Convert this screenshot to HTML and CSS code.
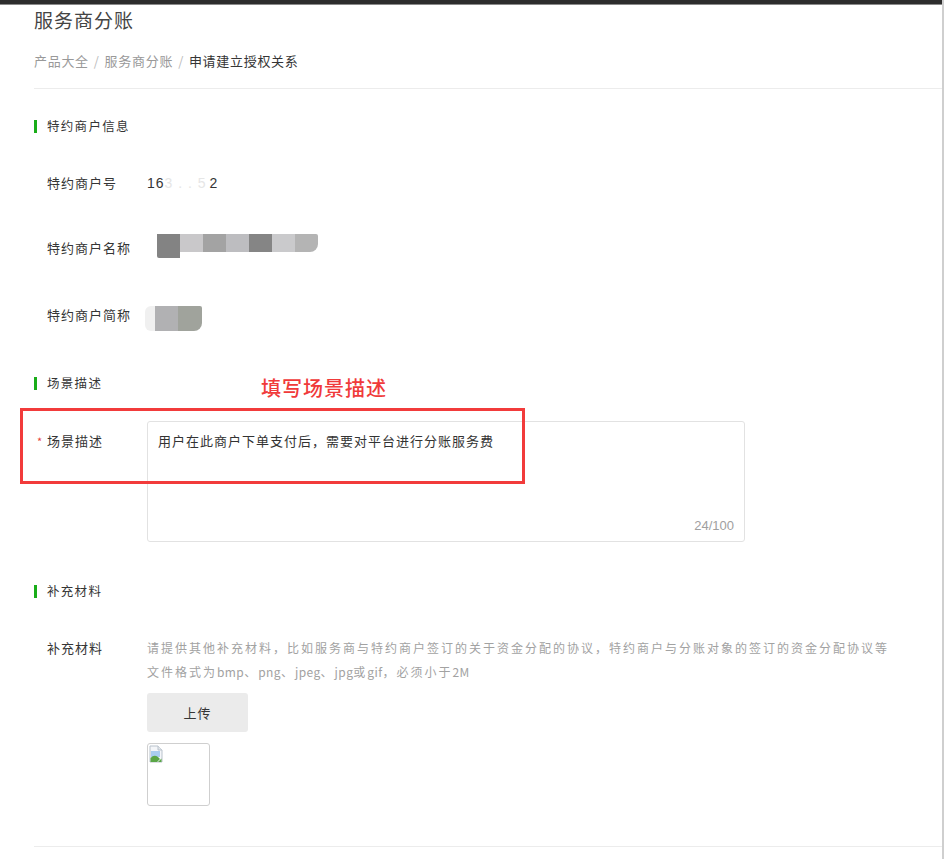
FILE: index.html
```html
<!DOCTYPE html>
<html lang="zh">
<head>
<meta charset="utf-8">
<title>服务商分账</title>
<link rel="stylesheet" href="styles.css">
</head>
<body>
<div class="page">
  <div class="topbar"></div>
  <div class="header">
    <h1 class="title">服务商分账</h1>
    <div class="crumbs"><span class="crumb">产品大全</span><span class="sep">/</span><span class="crumb">服务商分账</span><span class="sep">/</span><span class="crumb-cur">申请建立授权关系</span></div>
  </div>

  <div class="content">
    <div class="section-title s1">特约商户信息</div>
    <div class="row r1"><div class="label">特约商户号</div><div class="value num">16<span class="faint">3 . . 5</span>2</div></div>
    <div class="row r2"><div class="label">特约商户名称</div>
      <div class="value mask mask-name"><i class="b b1"></i><i class="b b2"></i><i class="b b3"></i><i class="b b4"></i><i class="b b5"></i><i class="b b6"></i><i class="b b7"></i></div>
    </div>
    <div class="row r3"><div class="label">特约商户简称</div>
      <div class="value mask mask-short"><i class="c c1"></i><i class="c c2"></i><i class="c c3"></i></div>
    </div>

    <div class="section-title s2">场景描述</div>
    <div class="row r4">
      <div class="label label-pad"><span class="req">*</span>场景描述</div>
      <div class="textarea">
        <div class="ta-text">用户在此商户下单支付后，需要对平台进行分账服务费</div>
        <div class="ta-count">24/100</div>
      </div>
    </div>

    <div class="section-title s3">补充材料</div>
    <div class="row r5">
      <div class="label">补充材料</div>
      <div class="upload">
        <div class="hint">请提供其他补充材料，比如服务商与特约商户签订的关于资金分配的协议，特约商户与分账对象的签订的资金分配协议等<br>文件格式为<span class="lat">bmp</span>、<span class="lat">png</span>、<span class="lat">jpeg</span>、<span class="lat">jpg</span>或<span class="lat">gif</span>，必须小于<span class="lat">2M</span></div>
        <button class="btn">上传</button>
        <div class="thumb">
          <svg class="broken" width="16" height="18" viewBox="0 0 16 18">
            <path d="M1 1h8l4 4v12H1z" fill="#f4f6f9" stroke="#b9c2cc" stroke-width="1"/>
            <path d="M9 1v4h4" fill="#e2e6ea" stroke="#b9c2cc" stroke-width="1"/>
            <rect x="2" y="6" width="9" height="6" fill="#a9cdf0"/>
            <path d="M1.5 17 L1.5 13 Q5 9 9 12 L11 14 L8 17z" fill="#5aa646"/>
            <path d="M9 17 L12.5 13.5 L12.5 17z" fill="#5aa646"/>
          </svg>
        </div>
      </div>
    </div>
  </div>
  <div class="bottom-line"></div>

  <div class="annot-text">填写场景描述</div>
  <div class="annot-box"></div>
</div>
</body>
</html>
```
FILE: styles.css
```css
html, body {
  margin: 0;
  padding: 0;
  background: #fff;
}
body {
  font-family: "Noto Sans CJK SC", "Microsoft YaHei", "Liberation Sans", sans-serif;
  color: #333;
  font-size: 13px;
}
.page {
  position: relative;
  width: 944px;
  min-height: 859px;
  box-sizing: border-box;
  border-right: 2px solid #cfcfcf;
}
.topbar {
  height: 4px;
  background: #2d2d2d;
  border-bottom: 1px solid #8a8a8a;
}
.header {
  margin-left: 34px;
  border-bottom: 1px solid #ececec;
  padding-bottom: 17px;
}
.title {
  margin: 0;
  font-size: 19px;
  letter-spacing: 1px;
  font-weight: normal;
  line-height: 30px;
  color: #444;
}
.crumbs {
  margin-top: 16px;
  font-size: 13px;
  letter-spacing: 0.7px;
  line-height: 20px;
  color: #999;
}
.sep {
  margin: 0 5px;
  color: #bbb;
}
.crumb-cur { color: #353535; }

.content {
  padding-left: 34px;
}
.section-title {
  display: flex;
  align-items: center;
  line-height: 20px;
  font-size: 12.5px;
  letter-spacing: 1.3px;
  color: #353535;
}
.section-title::before {
  content: "";
  width: 3px;
  height: 13px;
  background: #1aad19;
  margin-right: 10px;
}
.s1 { margin-top: 27px; }
.s2 { margin-top: 48px; }
.s3 { margin-top: 39px; }

.row {
  display: flex;
  padding-left: 13px;
  line-height: 20px;
}
.label {
  width: 100px;
  flex: none;
  color: #353535;
  letter-spacing: 1px;
}
.label-pad { padding-top: 10px; }
.r1 { margin-top: 37px; }
.r2 { margin-top: 45px; }
.r3 { margin-top: 47px; }
.r4 { margin-top: 28px; }
.r5 { margin-top: 37px; }

.value { color: #353535; }
.num {
  font-family: "Liberation Sans", Arial, sans-serif;
  font-size: 14px;
  letter-spacing: 1px;
}
.faint {
  display: inline-block;
  width: 45px;
  color: #e6e6e6;
  letter-spacing: 1px;
}
.mask { display: flex; align-items: flex-start; }
.mask-name { margin-left: 10px; margin-top: -4px; height: 24px; margin-bottom: -4px; }
.b {
  display: block;
  width: 23px;
  height: 18px;
}
.b1 { background: #838383; height: 24px; border-bottom-left-radius: 2px; }
.b2 { background: #c9c8ca; }
.b3 { background: #a3a3a3; }
.b4 { background: #bdbdc0; }
.b5 { background: #858585; }
.b6 { background: #cacacc; }
.b7 { background: #b4b4b4; border-top-right-radius: 2px; border-bottom-right-radius: 8px; }
.mask-short { margin-left: -2px; margin-top: 1px; height: 25px; margin-bottom: -6px; }
.c { display: block; height: 25px; }
.c1 { width: 10px; background: #f0f0f0; border-radius: 6px 0 0 6px; }
.c2 { width: 23px; background: #b1b1b3; }
.c3 { width: 24px; background: #a0a39c; border-radius: 0 2px 8px 0; }

.req {
  display: inline-block;
  width: 10px;
  margin-left: -10px;
  color: #e64340;
  font-size: 11px;
  letter-spacing: 0;
}
.textarea {
  width: 598px;
  height: 121px;
  box-sizing: border-box;
  border: 1px solid #e2e2e2;
  border-radius: 3px;
  padding: 9px 10px 5px 10px;
  display: flex;
  flex-direction: column;
  justify-content: space-between;
}
.ta-text {
  line-height: 20px;
  letter-spacing: 1px;
  color: #333;
}
.ta-count {
  align-self: flex-end;
  color: #a0a0a0;
  font-family: "Liberation Sans", Arial, sans-serif;
  font-size: 13px;
  line-height: 20px;
}

.upload { display: flex; flex-direction: column; align-items: flex-start; }
.hint {
  font-size: 12px;
  letter-spacing: 2px;
  line-height: 24px;
  color: #a2a2a2;
  margin-top: -2px;
  white-space: nowrap;
}
.lat { letter-spacing: 0.4px; }
.btn {
  margin-top: 9px;
  width: 101px;
  height: 39px;
  border: none;
  border-radius: 3px;
  background: #ebebeb;
  color: #353535;
  font-family: inherit;
  font-size: 13px;
  letter-spacing: 1px;
  padding: 0;
}
.thumb {
  margin-top: 11px;
  width: 63px;
  height: 63px;
  box-sizing: border-box;
  border: 1px solid #cfcfcf;
  border-radius: 3px;
  padding: 1px;
}
.broken { display: block; }

.bottom-line {
  margin-left: 34px;
  margin-top: 40px;
  border-top: 1px solid #ececec;
}

.annot-text {
  position: absolute;
  left: 261px;
  top: 374px;
  font-size: 20px;
  letter-spacing: 1px;
  line-height: 28px;
  font-weight: 500;
  color: #f03a3a;
}
.annot-box {
  position: absolute;
  left: 20px;
  top: 408px;
  width: 505px;
  height: 76px;
  box-sizing: border-box;
  border: 3px solid #f23b3b;
}
```
